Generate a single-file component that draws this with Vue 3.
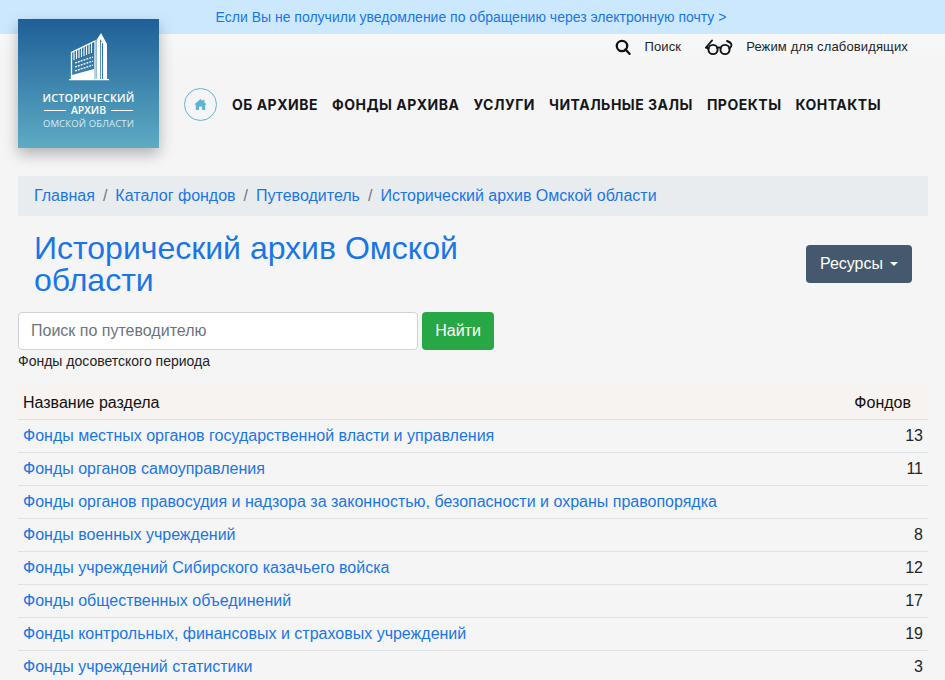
<template>
  <div class="page">
    <div class="notice">
      <a href="#">Если Вы не получили уведомление по обращению через электронную почту &gt;</a>
    </div>

    <header class="header">
      <div class="logo">
        <svg class="logo-building" viewBox="0 0 40 48" width="40" height="48">
          <!-- facade outline -->
          <path fill="none" stroke="#fff" stroke-width="1.3" d="M2.5 46 V19.5 L26 8 V46" />
          <!-- vertical bars of the upper floors -->
          <path stroke="#fff" stroke-width="1.1" d="M5 27 V18.5 M7.5 26 V17 M10 25 V16 M12.5 24 V14.5 M15 23 V13.5 M17.5 22 V12.5 M20 21 V11 M22.5 20 V10" />
          <!-- rows of windows -->
          <path stroke="#fff" stroke-width="1.3" fill="none" stroke-dasharray="2 1" d="M6 30 L24 24 M6 34 L24 28 M6 38 L24 32" />
          <path fill="#fff" d="M3 46 V42 L25 36 V46 Z" />
          <!-- tall wing -->
          <path fill="#fff" d="M27.5 7 L32 0 L38 11 V46 H34 V11 L31 6 V46 H27.5 Z" />
          <path fill="#fff" d="M31.8 9 H33 V46 H31.8 Z" />
          <path fill="#fff" d="M0 46 H40 V47.2 H0 Z" />
        </svg>
        <div class="logo-title">ИСТОРИЧЕСКИЙ</div>
        <div class="logo-mid"><span class="logo-rule"></span>АРХИВ<span class="logo-rule"></span></div>
        <div class="logo-sub">ОМСКОЙ ОБЛАСТИ</div>
      </div>

      <div class="header-main">
        <div class="tools">
          <a class="tool" href="#">
            <svg viewBox="0 0 16 16" width="16" height="16">
              <circle cx="7" cy="7" r="5.2" fill="none" stroke="#111" stroke-width="2.3" />
              <path d="M10.5 10.5 L14.5 14.8" stroke="#111" stroke-width="2.4" stroke-linecap="round" />
            </svg>
            <span>Поиск</span>
          </a>
          <a class="tool" href="#">
            <svg viewBox="0 0 28 18" width="28" height="18">
              <g fill="none" stroke="#111" stroke-width="1.9" stroke-linecap="round">
                <circle cx="8" cy="11.5" r="4.6" />
                <circle cx="20" cy="11.5" r="4.6" />
                <path d="M12.2 10 Q14 8.8 15.8 10 M3.6 10.5 L1 9.5 L7 2.5 M24.4 10.5 Q27 8 26.4 6.5 Q25.5 4 22 3" />
              </g>
            </svg>
            <span>Режим для слабовидящих</span>
          </a>
        </div>
        <nav class="nav">
          <a class="home" href="#">
            <svg viewBox="0 0 16 14" width="13" height="11">
              <path fill="#5bb5d9" d="M8 0 L11 2.6 V1 H13 V4.4 L16 7 H14 V14 H10 V9.5 H6 V14 H2 V7 H0 Z" />
            </svg>
          </a>
          <a v-for="item in navItems" :key="item" class="nav-link" href="#">{{ item }}</a>
        </nav>
      </div>
    </header>

    <main class="content">
      <ol class="breadcrumb">
        <li v-for="crumb in crumbs" :key="crumb"><a href="#">{{ crumb }}</a></li>
      </ol>

      <div class="title-row">
        <h1>Исторический архив Омской области</h1>
        <button class="resources" type="button">Ресурсы<i class="caret"></i></button>
      </div>

      <form class="search" @submit.prevent>
        <input type="text" placeholder="Поиск по путеводителю" />
        <button type="submit">Найти</button>
      </form>
      <div class="period">Фонды досоветского периода</div>

      <table class="funds">
        <thead>
          <tr>
            <th>Название раздела</th>
            <th class="count-head">Фондов</th>
          </tr>
        </thead>
        <tbody>
          <tr v-for="row in rows" :key="row.name">
            <td><a href="#">{{ row.name }}</a></td>
            <td class="count">{{ row.count }}</td>
          </tr>
        </tbody>
      </table>
    </main>
  </div>
</template>

<script setup>
const navItems = ['Об архиве', 'Фонды архива', 'Услуги', 'Читальные залы', 'Проекты', 'Контакты']

const crumbs = ['Главная', 'Каталог фондов', 'Путеводитель', 'Исторический архив Омской области']

const rows = [
  { name: 'Фонды местных органов государственной власти и управления', count: 13 },
  { name: 'Фонды органов самоуправления', count: 11 },
  { name: 'Фонды органов правосудия и надзора за законностью, безопасности и охраны правопорядка', count: '' },
  { name: 'Фонды военных учреждений', count: 8 },
  { name: 'Фонды учреждений Сибирского казачьего войска', count: 12 },
  { name: 'Фонды общественных объединений', count: 17 },
  { name: 'Фонды контрольных, финансовых и страховых учреждений', count: 19 },
  { name: 'Фонды учреждений статистики', count: 3 },
]
</script>

<style>
html, body {
  margin: 0;
  background: #f5f5f5;
  overflow: hidden;
}
</style>

<style scoped>
.page {
  height: 680px;
  overflow: hidden;
  font-family: "Liberation Sans", Arial, sans-serif;
  font-size: 16px;
  color: #212529;
  background: #f5f5f5;
}
a {
  color: #1a76e8;
  text-decoration: none;
}
.notice {
  height: 34px;
  line-height: 34px;
  padding-right: 3px;
  font-size: 14px;
  text-align: center;
  background: #cce8ff;
}
.header {
  display: flex;
  height: 142px;
  padding-left: 18px;
  background: linear-gradient(#f8f8f8, #f5f5f5 30px);
}
.logo {
  display: flex;
  flex-direction: column;
  align-items: center;
  flex: none;
  width: 141px;
  height: 129px;
  margin-top: -15px;
  box-sizing: border-box;
  padding-top: 14px;
  color: #fff;
  font-family: "Open Sans", sans-serif;
  background: linear-gradient(#1e5f97, #5dabc4);
  box-shadow: 0 6px 14px rgba(0, 0, 0, 0.28);
}
.logo-title {
  margin-top: 10px;
  font-size: 10.8px;
  line-height: 13px;
  font-weight: 600;
  letter-spacing: 0.2px;
}
.logo-mid {
  display: flex;
  align-items: center;
  gap: 5px;
  font-size: 10.5px;
  line-height: 13px;
  font-weight: 600;
}
.logo-rule {
  width: 22px;
  height: 1px;
  background: #fff;
}
.logo-sub {
  font-size: 9.5px;
  line-height: 13px;
  letter-spacing: 0.15px;
  color: #d6ebf2;
}
.header-main {
  flex: 1;
  min-width: 0;
}
.tools {
  display: flex;
  justify-content: flex-end;
  align-items: center;
  gap: 24px;
  height: 25px;
  padding-right: 37px;
}
.tool {
  display: flex;
  align-items: center;
  gap: 13px;
  font-size: 13px;
  letter-spacing: 0.14px;
  color: #212529;
}
.nav {
  display: flex;
  align-items: center;
  gap: 14px;
  margin-top: 29px;
  padding-left: 25px;
}
.home {
  display: flex;
  align-items: center;
  justify-content: center;
  width: 33px;
  height: 33px;
  margin-right: 1px;
  box-sizing: border-box;
  border: 1px solid #5bb5d9;
  border-radius: 50%;
}
.nav-link {
  font-family: Inter, sans-serif;
  font-size: 14px;
  font-weight: 700;
  letter-spacing: 0.5px;
  text-transform: uppercase;
  color: #14171a;
}
.content {
  padding: 0 17px 0 18px;
}
.breadcrumb {
  display: flex;
  list-style: none;
  margin: 0;
  padding: 0 16px;
  height: 40px;
  align-items: center;
  background: #e9ecef;
}
.breadcrumb li + li::before {
  content: "/";
  padding: 0 8px;
  color: #6c757d;
}
.title-row {
  display: flex;
  justify-content: space-between;
  align-items: center;
  padding: 16px 16px 0;
  margin-bottom: 16px;
}
h1 {
  width: 470px;
  margin: 0;
  font-size: 32px;
  font-weight: 400;
  line-height: 32px;
  color: #1a76e8;
}
.resources {
  display: flex;
  align-items: center;
  height: 38px;
  padding: 0 14px;
  border: 0;
  border-radius: 4px;
  font: inherit;
  color: #fff;
  background: #44596e;
}
.caret {
  margin-left: 7px;
  border-top: 4px solid #fff;
  border-left: 4px solid transparent;
  border-right: 4px solid transparent;
}
.search {
  display: flex;
  gap: 4px;
}
.search input {
  width: 400px;
  height: 38px;
  box-sizing: border-box;
  padding: 0 12px;
  border: 1px solid #ced4da;
  border-radius: 4px;
  font: inherit;
  background: #fff;
}
.search input::placeholder {
  color: #6c757d;
}
.search button {
  width: 72px;
  height: 38px;
  border: 0;
  border-radius: 4px;
  font: inherit;
  color: #fff;
  background: #28a745;
}
.period {
  margin-top: 2px;
  font-size: 14px;
  line-height: 18px;
  color: #212529;
}
.funds {
  width: 910px;
  margin-top: 16px;
  border-collapse: collapse;
}
th {
  height: 33px;
  padding: 0 5px;
  font-weight: 400;
  text-align: left;
  color: #111;
  background: #f6f3f0;
  border-bottom: 1px solid #dee2e6;
}
th.count-head {
  padding-right: 17px;
  text-align: right;
}
td {
  height: 32px;
  padding: 0 5px;
  border-bottom: 1px solid #dee2e6;
}
td.count {
  text-align: right;
}
</style>
